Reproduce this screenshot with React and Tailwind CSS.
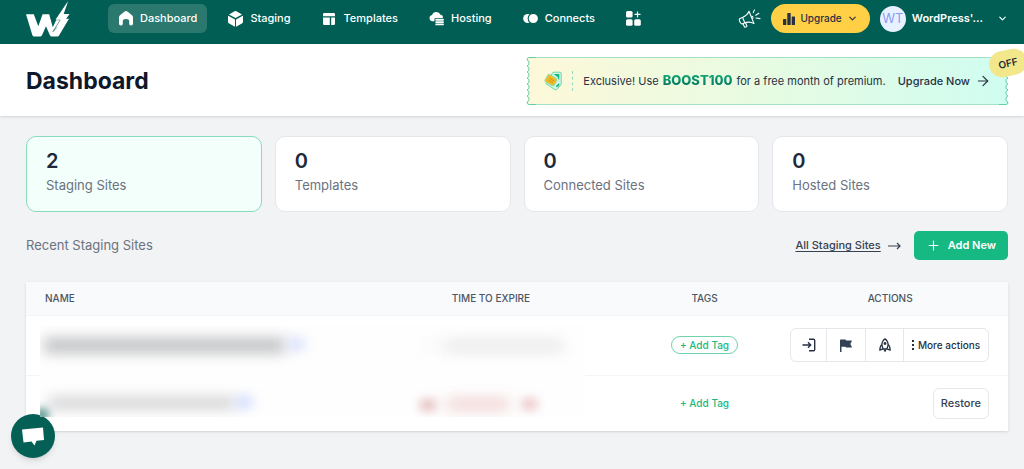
import React from "react";
import { ChevronDown, Plus, ArrowRight } from "lucide-react";

function Logo() {
  return (
    <svg width="44" height="37" viewBox="0 0 44 37" fill="#fff" aria-hidden="true">
      <path d="M0 14.200h7.800l4.500 12 4.300-12h6.600l3.600 13 4-8.500H43L33.200 35.200q-.5 1.300-1.900 1.300h-5.500q-1.400 0-1.900-1.300l-3.900-9-4 9q-.5 1.300-1.900 1.300H8.300q-1.400 0-1.900-1.300z" />
      <path d="M42.200.8 29.300 19.800h5L27 31.600 43.300 14h-5.600z" stroke="#005e54" strokeWidth=".6" />
      <path d="M42 1.500 29.900 19.500h5.400L30 28.500l6-4 7.500-10.500h-6z" />
    </svg>
  );
}

function HomeIcon() {
  return (
    <svg width="14" height="15" viewBox="0 0 14 15" fill="#fff" aria-hidden="true">
      <path d="M5.600.5q1.400-1 2.800 0l4.600 3.700q1 .8 1 2.100v6.400q0 1.800-1.800 1.800h-.4q-1.600 0-1.600-1.700v-2.400q0-2.400-3.200-2.400t-3.200 2.400v2.400q0 1.700-1.600 1.700h-.4Q0 14.500 0 12.700V6.300q0-1.300 1-2.100z" />
    </svg>
  );
}

function CubeIcon() {
  return (
    <svg width="15" height="16" viewBox="0 0 15 16" fill="#fff" aria-hidden="true">
      <path d="M6.600.3q.9-.5 1.800 0l5.200 2.900q.4.300 0 .5L7.500 7.100 1.400 3.700q-.4-.2 0-.5z" />
      <path d="M.2 4.700 7 8.500v7.300l-5.900-3.300Q0 11.900 0 10.700V5z" />
      <path d="M14.800 4.700 8 8.500v7.300l5.900-3.300q1.100-.6 1.100-1.800V5z" />
    </svg>
  );
}

function TemplateIcon() {
  return (
    <svg width="12" height="12" viewBox="0 0 12 12" fill="#fff" aria-hidden="true">
      <path d="M1.200 0h9.600Q12 0 12 1.200v2.100H0V1.200Q0 0 1.200 0z" />
      <path d="M0 4.600h6.800V12H1.200Q0 12 0 10.800z" />
      <path d="M8.200 4.600H12v6.200q0 1.200-1.200 1.200H8.200z" />
    </svg>
  );
}

function HostingIcon() {
  return (
    <svg width="16" height="15" viewBox="0 0 16 15" fill="#fff" aria-hidden="true">
      <path d="M3.300 3.800A4.800 4.800 0 0 1 12.300 3.500 3 3 0 0 1 14.800 6.900H7.300q-1.500 0-1.500 1.500v2.100H3.500a3.400 3.400 0 0 1-.2-6.700z" />
      <rect x="6.800" y="7.800" width="9" height="2" rx=".5" />
      <rect x="6.800" y="10.400" width="9" height="1.800" rx=".5" />
      <rect x="6.800" y="12.800" width="9" height="2" rx=".5" />
    </svg>
  );
}

function ConnectIcon() {
  return (
    <svg width="16" height="11" viewBox="0 0 16 11" fill="#fff" aria-hidden="true">
      <circle cx="5" cy="5.500" r="4.800" />
      <circle cx="11" cy="5.500" r="5.500" stroke="#005e54" strokeWidth="1.200" />
    </svg>
  );
}

function AppsIcon() {
  return (
    <svg width="15" height="15" viewBox="0 0 15 15" fill="#fff" aria-hidden="true">
      <rect width="6.600" height="6.600" rx="1.500" />
      <rect y="8.200" width="6.600" height="6.600" rx="1.500" />
      <rect x="8.200" y="8.200" width="6.600" height="6.600" rx="1.500" />
      <path d="M11.500.400v6M8.500 3.400h6" stroke="#fff" strokeWidth="1.200" />
    </svg>
  );
}

function MegaphoneIcon() {
  return (
    <svg width="23" height="19" viewBox="0 0 23 19" fill="none" stroke="#fff" strokeWidth="1.100" strokeLinecap="round" strokeLinejoin="round" aria-hidden="true">
      <path d="M11 2.200 16 14.600C12.800 12.700 9.800 12.600 6.400 14l-2.200.9C2.700 15.500.200 10.600 2 9.500l2.400-1.100C7.800 7 9.800 5.200 11 2.200z" />
      <path d="M4.600 8.500l2.200 5.200M5 14.700l1.400 3q.3.700 1 .4l1-.4q.7-.3.400-1l-1.400-3.100M13.800 7.200q1.600.3 1 2.200" />
      <path d="M15.300 3.600 16.400.900M17.700 6.200l3.200-1.900M18 9l4 .6" />
    </svg>
  );
}

function BarsIcon() {
  return (
    <svg width="12" height="12" viewBox="0 0 12 12" fill="#273142" aria-hidden="true">
      <rect y="6" width="3.300" height="6" rx=".6" />
      <rect x="4.300" y="0" width="3.400" height="12" rx=".6" />
      <rect x="8.700" y="3.500" width="3.300" height="8.500" rx=".6" />
    </svg>
  );
}

function VoucherIcon() {
  return (
    <svg width="18" height="20" viewBox="0 0 18 20" fill="none" aria-hidden="true">
      <path d="M9 1.200h7q1.200 0 1.200 1.200V13q0 .7-.5 1.200l-4 4.300q-.8.800-1.700.2L2 12.800z" fill="#d4f7e4" stroke="#5fd3a2" strokeWidth=".9" />
      <path d="M9.500 3h5.800v6.500L13.500 6z" fill="#17b980" />
      <path d="m12 14.800 3.300-2.800v2.500l-2.500 2z" fill="#17b980" />
      <rect x="1.800" y="5" width="10.500" height="8.400" rx="2" transform="rotate(30 7 9)" fill="#f5b921" stroke="#8fdcae" strokeWidth=".9" />
      <path d="m5.600 7.300 4.500 2.600M4.500 9.100 9 11.700" stroke="#b99417" strokeWidth=".8" />
    </svg>
  );
}

function TicketEdge({ className, fill }) {
  return (
    <svg width="10" height="48" viewBox="0 0 10 48" className={className} aria-hidden="true">
      <path d="M10 .5H3Q1 .5 1 3a3.200 3.200 0 0 1 0 6a3.200 3.200 0 0 1 0 6a3.200 3.200 0 0 1 0 6a3.200 3.200 0 0 1 0 6a3.200 3.200 0 0 1 0 6a3.200 3.200 0 0 1 0 6a3.200 3.200 0 0 1 0 6Q1 47.500 3 47.500H10" fill={fill} stroke="#5fcfa4" />
    </svg>
  );
}

function LoginIcon() {
  return (
    <svg width="14" height="14" viewBox="0 0 14 14" fill="none" stroke="#273142" strokeWidth="1.400" aria-hidden="true">
      <path d="M.5 7h8M6 4.300 8.700 7 6 9.700M7 1.200h4.500q1.200 0 1.200 1.200v9.200q0 1.200-1.200 1.200H7" />
    </svg>
  );
}

function FlagIcon() {
  return (
    <svg width="12" height="13" viewBox="0 0 12 13" fill="#334155" aria-hidden="true">
      <path d="M0 1.200Q0 .6.600.6H5.500l.7.900h5.100q.8 0 .5.800L10.300 5l1.500 2.800q.3.800-.5.800H6.200l-.8-.8H1.500V13H0z" />
    </svg>
  );
}

function RocketIcon() {
  return (
    <svg width="12" height="14" viewBox="0 0 12 14" fill="none" stroke="#273142" strokeWidth="1.300" strokeLinejoin="round" aria-hidden="true">
      <path d="M6 .8C3.700 2.500 2.800 4.800 2.900 7.200L4 10.800h4l1.100-3.600C9.200 4.800 8.300 2.500 6 .8z" />
      <path d="M2.900 6.500Q.9 8 .8 12.200L4 10.800M9.100 6.500q2 1.500 2.100 5.700L8 10.800M4.800 11l1.200 2.300L7.200 11" />
      <circle cx="6" cy="5.500" r=".8" fill="#273142" />
    </svg>
  );
}

const nav = [
  { label: "Dashboard", icon: HomeIcon, active: true },
  { label: "Staging", icon: CubeIcon },
  { label: "Templates", icon: TemplateIcon },
  { label: "Hosting", icon: HostingIcon },
  { label: "Connects", icon: ConnectIcon },
];

const stats = [
  { count: 2, label: "Staging Sites", active: true },
  { count: 0, label: "Templates" },
  { count: 0, label: "Connected Sites" },
  { count: 0, label: "Hosted Sites" },
];

function TopBar() {
  return (
    <header className="flex h-11 items-start bg-[#005e54] pr-4 pl-[26px] text-white">
      <a href="#" aria-label="Home">
        <Logo />
      </a>
      <nav className="ml-[38px] flex gap-[11px] pt-1">
        {nav.map(({ label, icon: Icon, active }) => (
          <a
            key={label}
            href="#"
            className={`flex h-[29px] items-center gap-[7px] rounded-md px-[10px] text-[11px] font-medium ${active ? "bg-[#2a786e]" : ""}`}
          >
            <span className="flex w-[15px] justify-center">
              <Icon />
            </span>
            {label}
          </a>
        ))}
        <a href="#" aria-label="More apps" className="flex h-[29px] items-center px-[10px]">
          <AppsIcon />
        </a>
      </nav>
      <div className="ml-auto flex items-center pt-1">
        <button aria-label="Announcements" className="mr-[10px]">
          <MegaphoneIcon />
        </button>
        <button className="mr-[10px] flex h-[29px] items-center gap-[5px] rounded-full bg-[#ffcf45] px-3 text-[10px] font-medium text-[#273142]">
          <BarsIcon />
          Upgrade
          <ChevronDown size={11} strokeWidth={2.500} />
        </button>
        <button className="flex items-center text-[11px] font-semibold">
          <span className="mr-[6px] flex size-[26px] items-center justify-center rounded-full bg-[#e8f1ff] text-[13px] font-normal text-[#8b9cf5]">
            WT
          </span>
          WordPress'...
          <ChevronDown size={11} strokeWidth={2.500} className="ml-[14px]" />
        </button>
      </div>
    </header>
  );
}

function Promo() {
  return (
    <div className="relative flex h-12">
      <TicketEdge fill="#fdf8da" />
      <div className="flex items-center border-y border-[#a5e0c4] bg-linear-to-r from-[#fdf8da] via-[#e6fbe2] to-[#d0fdf0] px-2 text-[11px] text-[#273142]">
        <VoucherIcon />
        <span className="mx-[10px] h-5 border-l border-dashed border-[#9bd9bd]" />
        <p className="flex items-baseline gap-1">
          Exclusive! Use
          <strong className="bg-linear-to-b from-[#17b980] to-[#005e54] bg-clip-text text-[13px] font-extrabold text-transparent">
            BOOST100
          </strong>
          for a free month of premium.
        </p>
        <a href="#" className="ml-3 flex items-center gap-[5px] font-medium">
          Upgrade Now
          <ArrowRight size={16} strokeWidth={1.800} />
        </a>
      </div>
      <TicketEdge className="-scale-x-100" fill="#d0fdf0" />
      <span className="absolute -top-[7px] -right-[18px] flex h-[26px] w-[38px] -rotate-12 items-center justify-center rounded-full bg-[#f2e78b] text-[10px] font-semibold text-[#1f2937]">
        OFF
      </span>
    </div>
  );
}

function RedactedArea() {
  return (
    <div aria-hidden="true" className="absolute top-11 bottom-[14px] left-[14px] z-20 w-[55.500%] overflow-hidden bg-[#fefefe]">
      <div className="absolute top-[12px] left-1 h-[15px] w-[241px] bg-[#bfc0c2] blur-[7px]" />
      <div className="absolute top-[12px] left-[248px] h-3 w-4 bg-[#d5defd] blur-[6px]" />
      <div className="absolute top-[14px] left-[382px] h-3 w-5 bg-[#fafafa] blur-[6px]" />
      <div className="absolute top-[14px] left-[405px] h-3 w-[118px] bg-[#e8e8e8] blur-[7px]" />
      <div className="absolute top-[72px] left-[9px] h-[10px] w-[186px] bg-[#c9cacc] blur-[7px]" />
      <div className="absolute top-[70px] left-[196px] h-3 w-4 bg-[#d0dafd] blur-[6px]" />
      <div className="absolute top-[73px] left-[380px] h-3 w-4 bg-[#e7c2c2] blur-[5px]" />
      <div className="absolute top-[72px] left-[407px] h-3 w-[62px] bg-[#f1d3d3] blur-[7px]" />
      <div className="absolute top-[72px] left-[482px] h-3 w-[15px] bg-[#edc9c9] blur-[5px]" />
      <div className="absolute -bottom-1 -left-1 size-3 bg-[#4c8b83] blur-[4px]" />
    </div>
  );
}

function SitesTable() {
  const action = "flex items-center justify-center border-r border-gray-200";
  return (
    <div className="relative mt-[22px]">
      <table className="w-full table-fixed bg-white text-center shadow-sm">
        <thead>
          <tr className="h-[33px] border-b border-gray-100 bg-[#f9fafc] text-[10px] text-[#4b5563]">
            <th className="w-[32.500%] pl-[19px] text-left font-medium">NAME</th>
            <th className="w-[29.700%] font-medium">TIME TO EXPIRE</th>
            <th className="w-[13.800%] font-medium">TAGS</th>
            <th className="w-[24%] font-medium">ACTIONS</th>
          </tr>
        </thead>
        <tbody>
          <tr className="h-[60px] border-b border-gray-100">
            <td />
            <td />
            <td>
              <button className="mx-auto block h-[18px] rounded-full border border-[#6fd3ab] px-2 text-[10px] leading-4 font-medium text-[#17b980]">
                + Add Tag
              </button>
            </td>
            <td className="pr-[19px]">
              <div className="ml-auto flex h-[34px] w-fit rounded-md border border-gray-200 text-[#273142]">
                <button aria-label="Log in" className={`w-9 ${action}`}>
                  <LoginIcon />
                </button>
                <button aria-label="Flag" className={`w-[39px] ${action}`}>
                  <FlagIcon />
                </button>
                <button aria-label="Launch" className={`w-[38px] ${action}`}>
                  <RocketIcon />
                </button>
                <button className="flex w-[84px] items-center justify-center gap-1 text-[10px] font-medium whitespace-nowrap">
                  <svg width="2" height="10" viewBox="0 0 2 10" fill="#273142" aria-hidden="true">
                    <path d="M0 0h2v2H0zM0 4h2v2H0zM0 8h2v2H0z" />
                  </svg>
                  More actions
                </button>
              </div>
            </td>
          </tr>
          <tr className="h-14">
            <td />
            <td />
            <td>
              <button className="mx-auto block text-[10px] leading-4 font-medium text-[#17b980]">+ Add Tag</button>
            </td>
            <td className="pr-[19px]">
              <button className="ml-auto block h-[31px] rounded-md border border-gray-200 px-[7px] text-[11px] font-medium text-[#334155]">
                Restore
              </button>
            </td>
          </tr>
        </tbody>
      </table>
      <RedactedArea />
    </div>
  );
}

export default function App() {
  return (
    <div className="min-h-screen overflow-x-hidden bg-[#f2f3f5] font-['Inter',sans-serif]">
      <TopBar />
      <div className="flex h-[72px] items-center justify-between bg-white pt-[2px] pr-[15px] pl-[26px] shadow-sm">
        <h1 className="text-[23px] font-bold text-[#0f172a]">Dashboard</h1>
        <Promo />
      </div>
      <main className="pt-5 pr-4 pb-9 pl-[26px]">
        <div className="grid grid-cols-4 gap-[13px]">
          {stats.map(({ count, label, active }) => (
            <a
              key={label}
              href="#"
              className={`block h-[76px] rounded-[10px] border px-[19px] pt-3 ${active ? "border-[#8adbbb] bg-[#f2fffb]" : "border-gray-200 bg-white"}`}
            >
              <div className="text-xl leading-6 font-semibold text-[#1e293b]">{count}</div>
              <div className="mt-[2px] text-[13px] leading-5 text-[#6b7280]">{label}</div>
            </a>
          ))}
        </div>
        <div className="mt-[19px] flex h-[29px] items-center">
          <h2 className="text-[13px] text-[#6b7280]">Recent Staging Sites</h2>
          <a href="#" className="ml-auto flex items-center gap-[7px] text-[11px] font-medium text-[#374151]">
            <span className="underline underline-offset-2">All Staging Sites</span>
            <svg width="13" height="8" viewBox="0 0 13 8" fill="none" stroke="#374151" strokeWidth="1.200" aria-hidden="true">
              <path d="M0 4h12M9 1l3 3-3 3" />
            </svg>
          </a>
          <button className="ml-[13px] flex h-[29px] items-center gap-[7px] rounded-[5px] bg-[#17b982] px-3 text-[11px] font-semibold text-white">
            <Plus size={15} strokeWidth={1.800} />
            Add New
          </button>
        </div>
        <SitesTable />
      </main>
      <button aria-label="Open chat" className="fixed bottom-[11px] left-[11px] z-10 flex size-11 items-center justify-center rounded-full bg-[#045f54] shadow-md">
        <svg width="22" height="19" viewBox="0 0 22 19" fill="#fff" aria-hidden="true">
          <path d="M0 2.400 21 .5 22 13l-7.500.7L12.500 18.500 9.500 14.500 1.500 15.500z" />
        </svg>
      </button>
    </div>
  );
}
